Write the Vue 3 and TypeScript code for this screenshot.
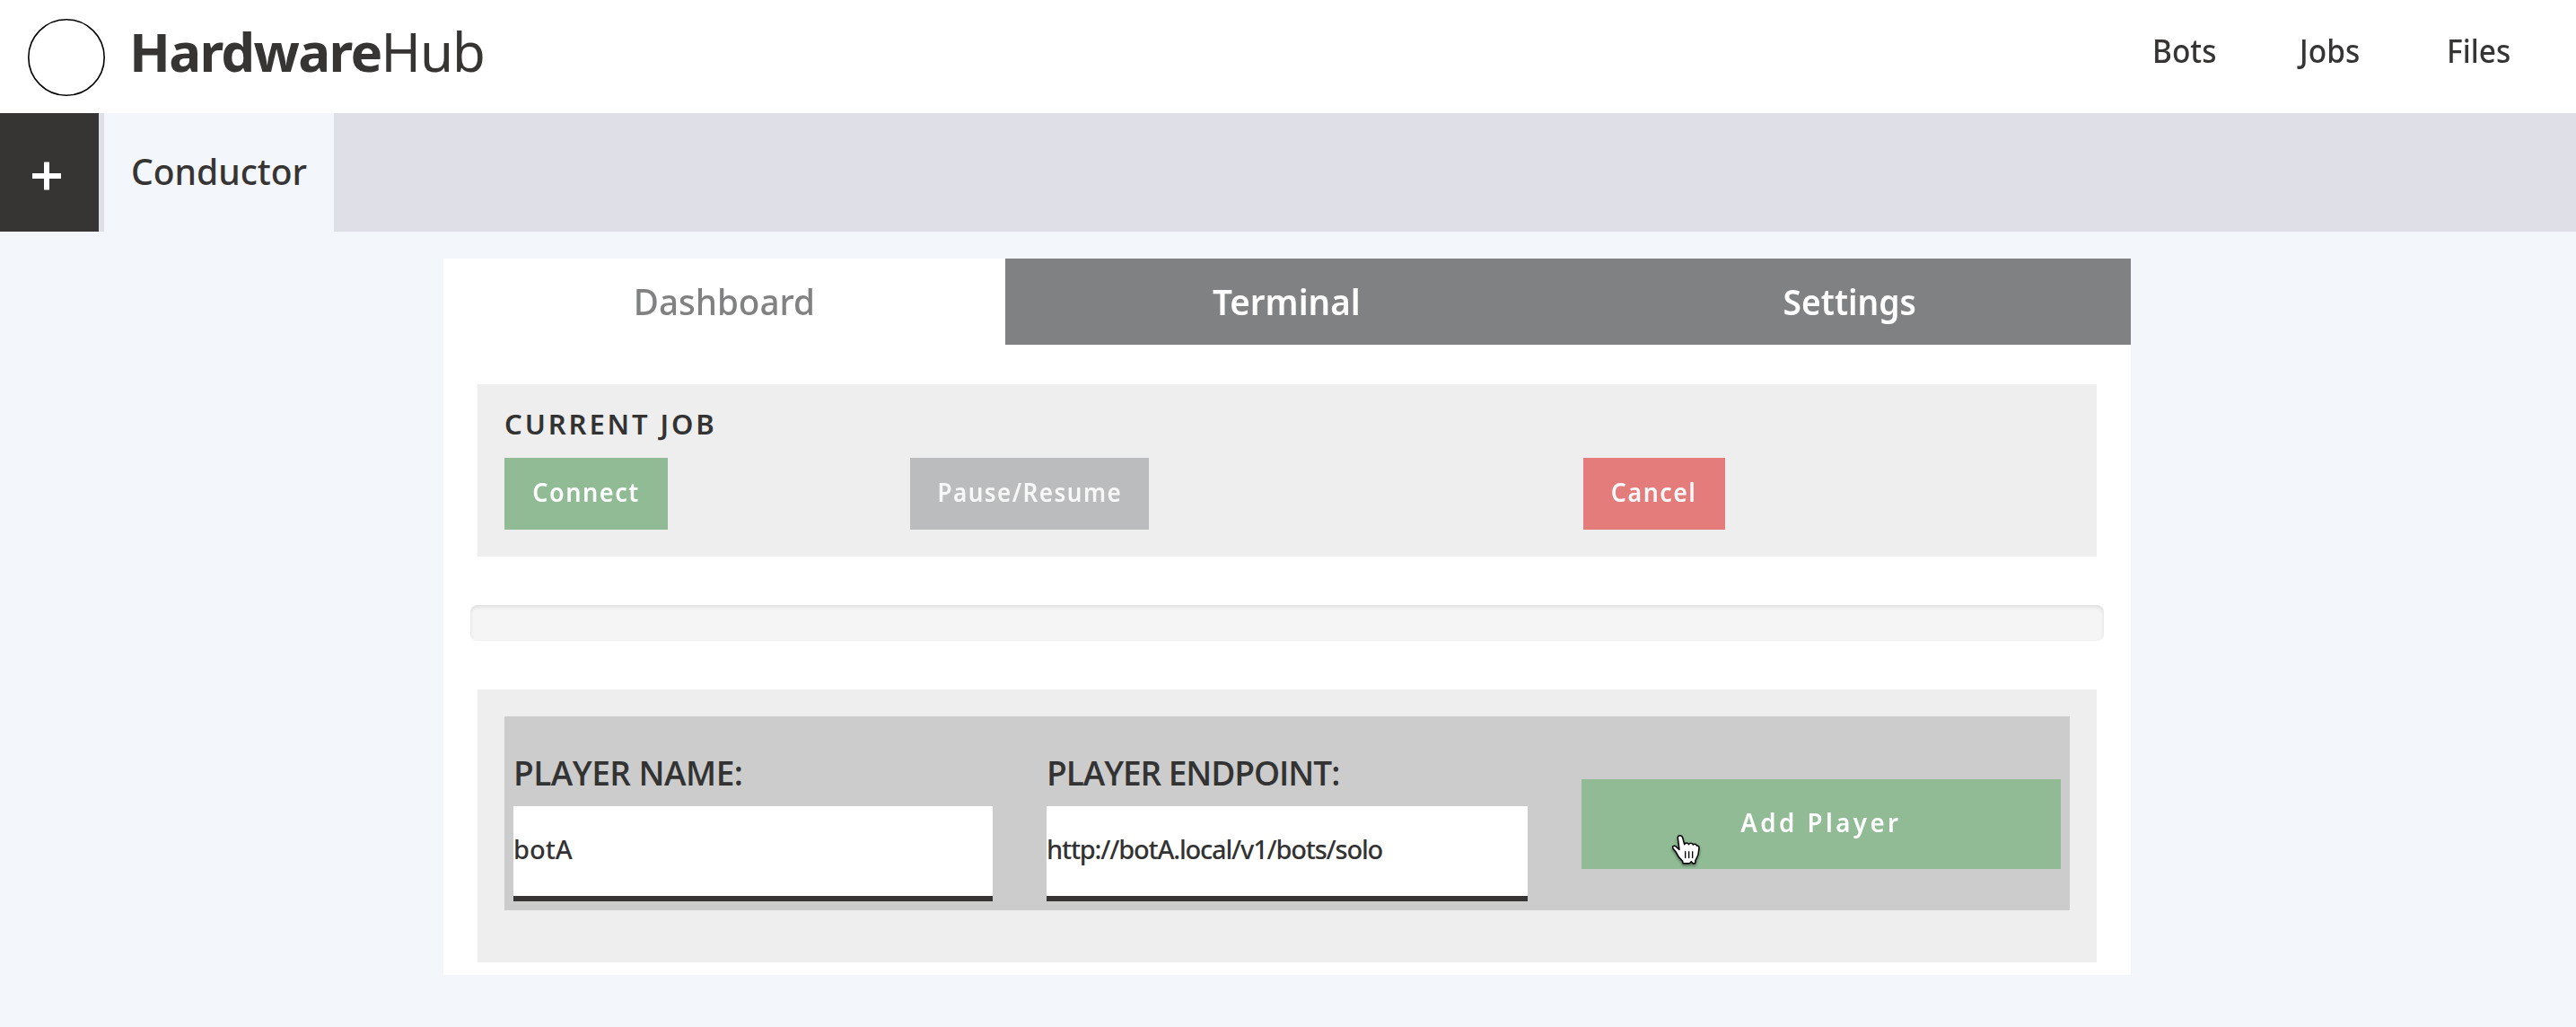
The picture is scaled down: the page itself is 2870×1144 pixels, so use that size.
<script setup lang="ts">
import { ref } from 'vue'

interface Item {
  label: string
  cls: string
}

const nav: Item[] = [
  { label: 'Bots', cls: 'bots' },
  { label: 'Jobs', cls: 'jobs' },
  { label: 'Files', cls: 'files' },
]
const views: Item[] = [
  { label: 'Dashboard', cls: 'dashboard' },
  { label: 'Terminal', cls: 'terminal' },
  { label: 'Settings', cls: 'settings' },
]
const active = ref('Dashboard')
const playerName = ref('botA')
const playerEndpoint = ref('http://botA.local/v1/bots/solo')
</script>

<template>
  <div class="page">
    <header class="header">
      <svg class="logo" viewBox="0 0 86 86"><circle cx="43" cy="43" r="42.2" /></svg>
      <h1 class="brand"><b>Hardware</b><span>Hub</span></h1>
      <nav class="nav">
        <a v-for="n in nav" :key="n.label" :class="n.cls"><span>{{ n.label }}</span></a>
      </nav>
    </header>

    <div class="bots-bar">
      <button class="add" aria-label="Add bot">
        <svg viewBox="0 0 32 32"><path d="M16 0.5V31.5M0 16H32" /></svg>
      </button>
      <div class="bot-tab"><span>Conductor</span></div>
    </div>

    <main class="panel">
      <div class="views">
        <button
          v-for="v in views"
          :key="v.label"
          class="view"
          :class="[v.cls, { active: v.label === active }]"
          @click="active = v.label"
        ><span>{{ v.label }}</span></button>
      </div>

      <section class="card job">
        <h2><span>CURRENT JOB</span></h2>
        <div class="actions">
          <div class="cell"><button class="btn connect"><span>Connect</span></button></div>
          <div class="cell wide"><button class="btn pause"><span>Pause/Resume</span></button></div>
          <div class="cell"><button class="btn cancel"><span>Cancel</span></button></div>
        </div>
      </section>

      <div class="progress"></div>

      <section class="card players">
        <form class="player-form" @submit.prevent>
          <label class="field">
            <span class="caption name">PLAYER NAME:</span>
            <input v-model="playerName" class="in-name" type="text" />
          </label>
          <label class="field second">
            <span class="caption endpoint">PLAYER ENDPOINT:</span>
            <input v-model="playerEndpoint" class="in-endpoint" type="text" />
          </label>
          <button class="add-player">
            <span>Add Player</span>
            <svg class="pointer" viewBox="60 54 111 114">
              <path
                d="M88 71C86 61 101 59 104 69L110 92C112 86 122 85 124 92C127 86 137 86 139 93C142 89 150 90 151 96C159 94 160 101 158 112C158 130 150 138 147 145L146 155H138L133 149L127 155H105L104 148C95 140 88 132 82 118L72 106C68 98 76 93 83 100L93 109Z"
              />
              <path class="creases" d="M113 115V138M125 115V138M137 115V138" />
            </svg>
          </button>
        </form>
      </section>
    </main>
  </div>
</template>

<style>
body {
  margin: 0;
  background: #f3f6fb;
}
</style>

<style scoped>
.page {
  height: 1144px;
  overflow: hidden;
  background: #f3f6fb;
  color: #373534;
  font-family: 'Noto Sans', 'Open Sans', sans-serif;
  font-weight: 500;
}
.page * {
  box-sizing: border-box;
}
button,
input {
  margin: 0;
  padding: 0;
  border: 0;
  border-radius: 0;
  outline: 0;
  font: inherit;
  color: inherit;
}
.header {
  display: flex;
  align-items: flex-start;
  height: 126px;
  padding: 0 0 0 31px;
  background: #fff;
}
.logo {
  width: 86px;
  height: 86px;
  margin-top: 21px;
  fill: none;
  stroke: #000;
  stroke-width: 1.6;
}
.brand {
  margin: 0 0 0 27px;
  font-size: 60px;
  line-height: 115px;
  font-weight: 400;
  white-space: nowrap;
}
.brand b {
  font-weight: 700;
  letter-spacing: -1.7px;
}
.brand span {
  letter-spacing: -1px;
}
.nav {
  display: flex;
  margin-left: auto;
  font-size: 36px;
  line-height: 114px;
}
.nav a {
  width: 164px;
}
.nav .files {
  width: 144px;
}
.nav span {
  display: inline-block;
  transform: scaleX(0.93);
  transform-origin: 0 50%;
}
.bots-bar {
  display: flex;
  height: 132px;
  background: #dfdfe8;
}
.add {
  width: 110px;
  margin-right: 6px;
  background: #373534;
  display: flex;
  align-items: flex-start;
  padding: 54px 0 0 36px;
}
.add svg {
  width: 32px;
  height: 32px;
  fill: none;
  stroke: #fff;
  stroke-width: 6;
}
.bot-tab {
  width: 256px;
  padding-left: 30px;
  background: #f3f6fb;
  font-size: 39px;
  line-height: 130px;
  white-space: nowrap;
}
.panel {
  width: 1880px;
  height: 798px;
  margin: 30px 0 0 494px;
  background: #fff;
}
.views {
  display: flex;
  height: 96px;
}
.view {
  width: 627px;
  height: 96px;
  padding-bottom: 2px;
  background: #808183;
  color: #fff;
  font-size: 40px;
  font-weight: 600;
}
.view.active {
  width: 626px;
  background: #fff;
  color: #808183;
  font-weight: 500;
}
.view span,
.btn span,
.add-player span {
  display: inline-block;
}
.dashboard span {
  transform: scaleX(0.965);
}
.terminal span {
  transform: scaleX(0.965);
}
.settings span {
  transform: scaleX(0.93);
}
.card {
  margin: 0 38px;
  padding: 30px;
  background: #eee;
}
.job {
  height: 192px;
  margin-top: 44px;
}
.job h2 {
  margin: 0 0 23px;
  font-size: 31px;
  line-height: 29px;
  font-weight: 600;
  letter-spacing: 2.9px;
  color: #333;
}
.actions {
  display: flex;
}
.cell {
  width: 452px;
}
.cell.wide {
  width: 750px;
}
.btn {
  height: 80px;
  padding-bottom: 6px;
  color: #fff;
  font-size: 29px;
  font-weight: 600;
  letter-spacing: 1.6px;
  white-space: nowrap;
}
.connect {
  width: 182px;
  background: #90bb95;
}
.connect span {
  transform: scaleX(0.935);
}
.pause {
  width: 266px;
  background: #bbbcbe;
  color: #f8f8f8;
}
.pause span {
  transform: scaleX(0.9);
}
.cancel {
  width: 158px;
  background: #e57c7c;
  color: #fafafa;
}
.cancel span {
  transform: scaleX(0.925);
}
.progress {
  height: 40px;
  margin: 54px 30px;
  border-radius: 8px;
  background: #f5f5f5;
  box-shadow: inset 0 2px 4px rgba(0, 0, 0, 0.1);
}
.players {
  height: 304px;
}
.player-form {
  display: flex;
  align-items: flex-start;
  height: 216px;
  padding: 0 10px;
  background: #ccc;
}
.field {
  display: flex;
  flex-direction: column;
  width: 534px;
  margin-right: 60px;
}
.field.second {
  width: 536px;
}
.caption {
  height: 100px;
  padding-top: 37px;
  font-family: 'Open Sans', 'Noto Sans', sans-serif;
  font-size: 37px;
  line-height: 52px;
  font-weight: 600;
  letter-spacing: -0.5px;
  color: #333;
  white-space: nowrap;
}
.caption.endpoint {
  letter-spacing: -1.05px;
}
input {
  height: 106px;
  padding: 0 0 6px;
  border-bottom: 6px solid #373534;
  background: #fff;
  color: #333;
  font-size: 29px;
}
.in-endpoint {
  letter-spacing: -1.2px;
}
.add-player {
  position: relative;
  width: 534px;
  height: 100px;
  margin-top: 70px;
  padding-bottom: 6px;
  background: #90bb95;
  color: #fff;
  font-size: 29px;
  font-weight: 600;
  letter-spacing: 3.6px;
}
.add-player span {
  transform: scaleX(0.955);
}
.pointer {
  position: absolute;
  left: 98px;
  top: 60px;
  width: 37px;
  height: 38px;
  fill: #fff;
  stroke: #000;
  stroke-width: 4.5;
  stroke-linejoin: round;
  filter: drop-shadow(0 2px 1.5px rgba(0, 0, 0, 0.4));
}
.creases {
  stroke-width: 4;
}
</style>
